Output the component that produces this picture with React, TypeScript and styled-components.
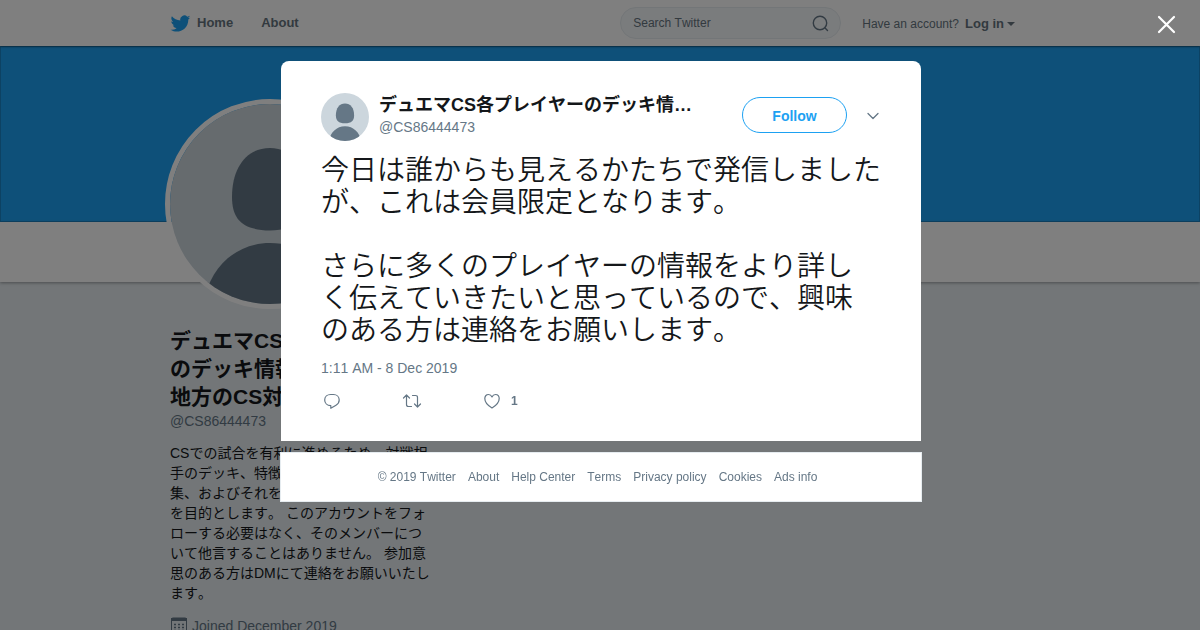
import React from "react";
import styled, { createGlobalStyle } from "styled-components";

const fontStack = `"Liberation Sans", "Noto Sans CJK JP", sans-serif`;

const GlobalStyle = createGlobalStyle`
  * { box-sizing: border-box; }
  body {
    margin: 0;
    background: #e6ecf0;
    color: #14171a;
    font-family: ${fontStack};
    font-size: 14px;
    line-height: 20px;
    font-kerning: none;
    overflow: hidden;
  }
  button, input { font-family: inherit; font-kerning: inherit; }
  a { color: inherit; text-decoration: none; }
  h1, h2, p { margin: 0; }
`;

const Page = styled.div`
  height: 100vh;
  overflow: hidden;
`;

const Container = styled.div`
  width: 100%;
  max-width: 860px;
  margin: 0 auto;
`;

const TopBar = styled.header`
  position: relative;
  background: #fff;
  height: 46px;
  box-shadow: 0 1px 2px rgba(0, 0, 0, 0.35);
`;

const TopBarInner = styled(Container)`
  display: flex;
  align-items: center;
  height: 46px;
  color: #66757f;
`;

const Nav = styled.nav`
  display: flex;
  flex: 1;
  gap: 28px;
  font-size: 13px;
  font-weight: bold;
`;

const NavLink = styled.a`
  display: flex;
  align-items: center;
  gap: 6px;
  height: 46px;
`;

const SearchForm = styled.form`
  display: flex;
  align-items: center;
  width: 221px;
  height: 32px;
  padding: 0 11px 0 12px;
  background: #f5f8fa;
  border: 1px solid #e6ecf0;
  border-radius: 16px;
`;

const SearchInput = styled.input`
  flex: 1;
  min-width: 0;
  padding: 0;
  border: 0;
  outline: 0;
  background: transparent;
  color: #66757f;
  font-size: 12px;
  &::placeholder { color: #66757f; opacity: 1; }
`;

const IconButton = styled.button`
  display: flex;
  align-items: center;
  padding: 0;
  border: 0;
  background: transparent;
  color: #657786;
  cursor: pointer;
`;

const Account = styled.div`
  display: flex;
  align-items: center;
  gap: 6px;
  margin: 1px 15px 0 21px;
  font-size: 12px;
  white-space: nowrap;
`;

const LoginLink = styled.a`
  display: flex;
  align-items: center;
  gap: 3px;
  font-size: 13px;
  font-weight: bold;
`;

const LoginText = styled.span`
  height: 14px;
  line-height: 14px;
  overflow: hidden;
`;

const Caret = styled.span`
  border: 4px solid transparent;
  border-top-color: currentColor;
  border-bottom: 0;
`;

const Banner = styled.div`
  height: 176px;
  background: #1da1f2;
  border: 1px solid #1a85c6;
`;

const ProfileBar = styled.div`
  height: 60px;
  background: #fff;
  box-shadow: 0 1px 3px rgba(0, 0, 0, 0.35);
`;

const ProfileBarInner = styled(Container)`
  position: relative;
`;

const ProfilePhoto = styled.div`
  position: absolute;
  left: -5px;
  top: -123px;
  width: 210px;
  height: 210px;
  border: 5px solid #fff;
  border-radius: 50%;
  overflow: hidden;
`;

const Sidebar = styled.aside`
  width: 264px;
  padding-top: 45px;
`;

const ProfileName = styled.h1`
  font-size: 21px;
  line-height: 28px;
  font-weight: bold;
  white-space: pre;
`;

const Handle = styled.a`
  display: block;
  color: #657786;
`;

const Bio = styled.p`
  margin: 12px 0 13px;
  white-space: pre;
`;

const Joined = styled.div`
  display: flex;
  align-items: center;
  gap: 4px;
  color: #657786;
`;

const Overlay = styled.div`
  position: fixed;
  inset: 0;
  padding: 61px 0 0 2px;
  background: rgba(0, 0, 0, 0.5);
`;

const CloseButton = styled(IconButton)`
  position: absolute;
  top: 15px;
  right: 24px;
  color: #fff;
`;

const Modal = styled.div`
  display: flex;
  flex-direction: column;
  gap: 11px;
  width: 100%;
  max-width: 642px;
  margin: 0 auto;
`;

const TweetCard = styled.article`
  margin: 0 1px;
  padding: 32px 40px 30px;
  background: #fff;
  border-radius: 8px 8px 0 0;
`;

const TweetHeader = styled.div`
  display: flex;
  align-items: center;
  height: 48px;
`;

const SmallPhoto = styled.div`
  flex: none;
  width: 48px;
  height: 48px;
  border-radius: 50%;
  overflow: hidden;
`;

const Author = styled.div`
  flex: 1;
  min-width: 0;
  margin: 0 40px 4px 10px;
`;

const AuthorName = styled.h2`
  font-size: 18px;
  line-height: 24px;
  font-weight: bold;
  white-space: nowrap;
  overflow: hidden;
  text-overflow: ellipsis;
`;

const FollowButton = styled.button`
  width: 105px;
  height: 36px;
  padding: 2px 0 0;
  margin: 0 20px 4px 0;
  border: 1px solid #1da1f2;
  border-radius: 18px;
  background: #fff;
  color: #1da1f2;
  font-size: 14px;
  font-weight: bold;
  cursor: pointer;
`;

const MenuButton = styled(IconButton)`
  margin: 0 2px 2px 0;
`;

const TweetText = styled.p`
  margin-top: 14px;
  font-size: 28px;
  font-weight: 350;
  line-height: 32px;
  white-space: pre-line;
`;

const TweetTime = styled.p`
  margin-top: 11px;
  color: #657786;
`;

const Actions = styled.div`
  display: flex;
  margin-top: 13px;
`;

const ActionButton = styled(IconButton)`
  width: 80px;
  height: 20px;
  gap: 9px;
  padding-left: 1px;
  font-size: 12px;
  font-weight: bold;
`;

const Footer = styled.footer`
  display: flex;
  align-items: center;
  justify-content: center;
  gap: 12px;
  height: 50px;
  padding-right: 7px;
  background: #fff;
  border: 1px solid #e6ecf0;
  color: #657786;
  font-size: 12px;
`;

const DefaultAvatar = () => (
  <svg viewBox="0 0 200 200" width="100%" height="100%" display="block" aria-hidden="true">
    <rect width="200" height="200" fill="#ccd6dd" />
    <path
      fill="#657786"
      d="M100 44C77 44 62 63 62 93C62 116 73 126 100 126.500C127 126 138 116 138 93C138 63 123 44 100 44Z"
    />
    <path fill="#657786" d="M34 200C38 165 65 139 100 139C135 139 162 165 166 200Z" />
  </svg>
);

const BirdIcon = () => (
  <svg viewBox="0 0 24 20" width="21" height="17" fill="#1da1f2" aria-hidden="true">
    <path d="M23.600 2.900c-.9.400-1.800.6-2.700.7 1-.6 1.700-1.500 2.100-2.600-.9.500-1.900.9-3 1.100A4.800 4.800 0 0 0 11.800 6.500C7.800 6.300 4.300 4.400 1.900 1.500.6 3.700 1.200 6.500 3.400 7.900c-.8 0-1.500-.2-2.200-.6 0 2.300 1.600 4.300 3.800 4.800-.7.200-1.400.2-2.100.1.600 1.900 2.400 3.300 4.500 3.300A9.600 9.600 0 0 1 .3 17.400c8.900 5.700 21.100-.5 20.900-12.100.9-.6 1.700-1.500 2.400-2.400z" />
  </svg>
);

const footerLinks = ["About", "Help Center", "Terms", "Privacy policy", "Cookies", "Ads info"];

const bio = `CSでの試合を有利に進めるため、対戦相
手のデッキ、特徴などの情報の収
集、およびそれを共有すること
を目的とします。 このアカウントをフォ
ローする必要はなく、そのメンバーにつ
いて他言することはありません。 参加意
思のある方はDMにて連絡をお願いいたし
ます。`;

const tweet = `今日は誰からも見えるかたちで発信しました
が、これは会員限定となります。

さらに多くのプレイヤーの情報をより詳し
く伝えていきたいと思っているので、興味
のある方は連絡をお願いします。`;

export default function App() {
  return (
    <>
      <GlobalStyle />
      <Page lang="ja">
        <TopBar>
          <TopBarInner>
            <Nav>
              <NavLink href="#home">
                <BirdIcon />
                Home
              </NavLink>
              <NavLink href="#about">About</NavLink>
            </Nav>
            <SearchForm role="search">
              <SearchInput type="text" placeholder="Search Twitter" aria-label="Search Twitter" />
              <IconButton type="button" aria-label="Search">
                <svg width="17" height="17" viewBox="0 0 17 17" fill="none" stroke="currentColor" strokeWidth="1.400" strokeLinecap="round">
                  <circle cx="8" cy="8" r="6.700" />
                  <path d="M12.800 12.800L15.500 15.500" />
                </svg>
              </IconButton>
            </SearchForm>
            <Account>
              <span>Have an account?</span>
              <LoginLink href="#login">
                <LoginText>Log in</LoginText>
                <Caret />
              </LoginLink>
            </Account>
          </TopBarInner>
        </TopBar>
        <Banner />
        <ProfileBar>
          <ProfileBarInner>
            <ProfilePhoto>
              <DefaultAvatar />
            </ProfilePhoto>
          </ProfileBarInner>
        </ProfileBar>
        <Container>
          <Sidebar>
            <ProfileName>{"デュエマCS各プレイヤー\nのデッキ情報\n地方のCS対戦"}</ProfileName>
            <Handle href="#profile">@CS86444473</Handle>
            <Bio>{bio}</Bio>
            <Joined>
              <svg width="18" height="18" viewBox="0 0 18 18" aria-hidden="true">
                <path d="M3 1H15Q16.500 1 16.500 2.500V15.500Q16.500 17 15 17H3Q1.500 17 1.500 15.500V2.500Q1.500 1 3 1Z" fill="none" stroke="#657786" />
                <path d="M1 1H17V4H1Z" fill="#657786" />
                <path d="M4 7.500H14M4 10.500H14M4 13.500H14" stroke="#657786" strokeWidth="1.500" strokeDasharray="2 2" />
              </svg>
              Joined December 2019
            </Joined>
          </Sidebar>
        </Container>
      </Page>

      <Overlay lang="ja">
        <CloseButton type="button" aria-label="Close">
          <svg width="19" height="19" viewBox="0 0 19 19" fill="none" stroke="currentColor" strokeWidth="2.200" strokeLinecap="round">
            <path d="M2 2L17 17M17 2L2 17" />
          </svg>
        </CloseButton>
        <Modal role="dialog" aria-label="Tweet">
          <TweetCard>
            <TweetHeader>
              <SmallPhoto>
                <DefaultAvatar />
              </SmallPhoto>
              <Author>
                <AuthorName>デュエマCS各プレイヤーのデッキ情報 地方のCS対戦</AuthorName>
                <Handle href="#profile">@CS86444473</Handle>
              </Author>
              <FollowButton type="button">Follow</FollowButton>
              <MenuButton type="button" aria-label="More">
                <svg width="12" height="8" viewBox="0 0 12 8" fill="none" stroke="currentColor" strokeWidth="1.300" strokeLinecap="round" strokeLinejoin="round">
                  <path d="M1 1.500L6 6.500L11 1.500" />
                </svg>
              </MenuButton>
            </TweetHeader>
            <TweetText>{tweet}</TweetText>
            <TweetTime>1:11 AM - 8 Dec 2019</TweetTime>
            <Actions>
              <ActionButton type="button" aria-label="Reply">
                <svg width="20" height="18" viewBox="0 0 20 18" fill="none" stroke="currentColor" strokeWidth="1.200" strokeLinejoin="round">
                  <path d="M8.800 13.600C5 13.600 2.700 11 2.700 7.900C2.700 4.600 5.400 2.500 8.600 2.500H11.500C14.800 2.500 17.200 4.900 17.200 8C17.200 10.300 16 12 14 13.200L8.800 16.300Z" />
                </svg>
              </ActionButton>
              <ActionButton type="button" aria-label="Retweet">
                <svg width="20" height="18" viewBox="0 0 20 18" fill="none" stroke="currentColor" strokeWidth="1.200" strokeLinecap="round" strokeLinejoin="round">
                  <path d="M1.500 6L4.500 3L7.500 6M4.500 3V12.500Q4.500 14.500 6.500 14.500H9.500M12.500 12L15.500 15L18.500 12M15.500 15V5.500Q15.500 3.500 13.500 3.500H10.500" />
                </svg>
              </ActionButton>
              <ActionButton type="button" aria-label="Like">
                <svg width="20" height="18" viewBox="0 0 20 18" fill="none" stroke="currentColor" strokeWidth="1.200" strokeLinejoin="round">
                  <path d="M10 16C6.500 14 2.800 10.500 2.800 6.600C2.800 4.200 4.500 2.500 6.500 2.500C8 2.500 9.300 3.400 10 4.900C10.700 3.400 12 2.500 13.500 2.500C15.500 2.500 17.200 4.200 17.200 6.600C17.200 10.500 13.500 14 10 16Z" />
                </svg>
                1
              </ActionButton>
            </Actions>
          </TweetCard>
          <Footer>
            <span>© 2019 Twitter</span>
            {footerLinks.map((label) => (
              <a key={label} href="#footer">{label}</a>
            ))}
          </Footer>
        </Modal>
      </Overlay>
    </>
  );
}
